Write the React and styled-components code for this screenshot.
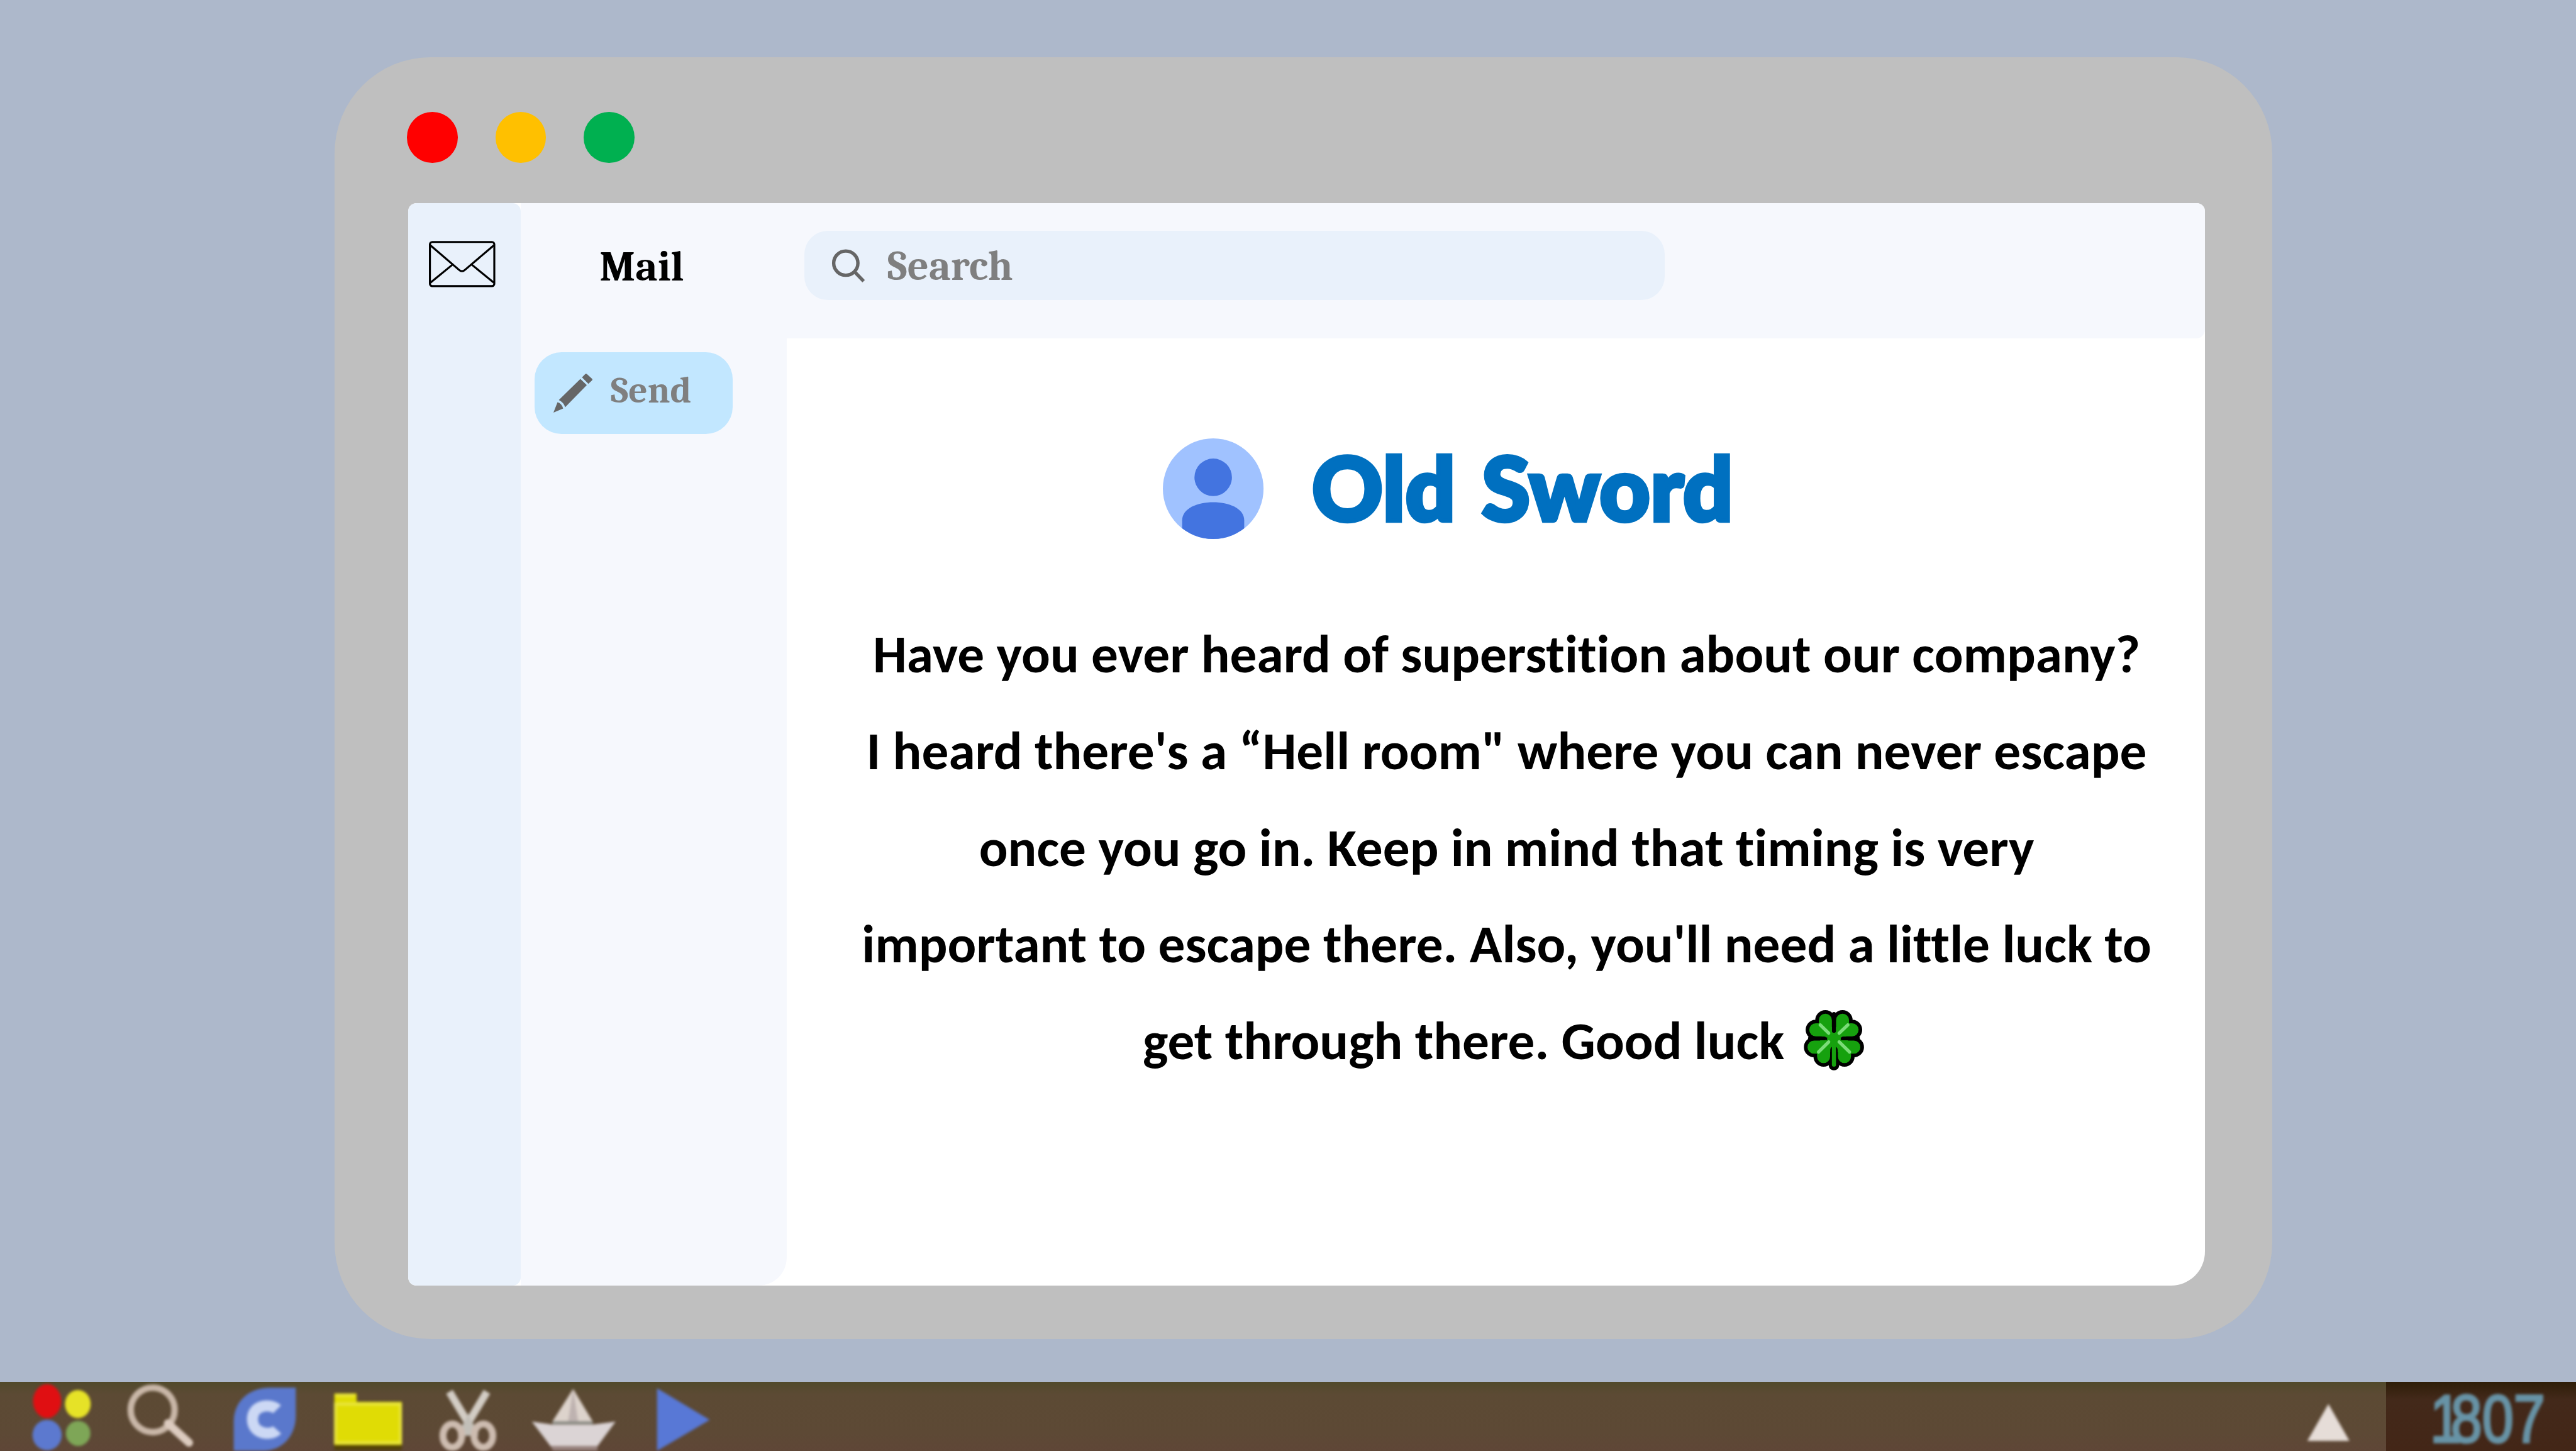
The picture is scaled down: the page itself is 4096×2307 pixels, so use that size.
import React from "react";
import styled, { createGlobalStyle } from "styled-components";

/* Design units are laid out on a 4400-wide artboard. */
const u = (n) => `${((n * 4096) / 4400).toFixed(2)}px`;

const serif = `Cambria, Caladea, "Liberation Serif", serif`;

const GlobalStyle = createGlobalStyle`
  * { box-sizing: border-box; }
  body { margin: 0; overflow: hidden; }
`;

const Desktop = styled.div`
  width: 4096px;
  height: 2307px;
  display: flex;
  flex-direction: column;
  justify-content: space-between;
  background: #adb8cb;
  overflow: hidden;
`;

const Window = styled.main`
  width: ${u(3310)};
  height: ${u(2189.5)};
  margin: ${u(97.3)} 0 0 ${u(571)};
  padding: 0 ${u(115)} 0 ${u(126.3)};
  border-radius: ${u(164)};
  background: #bfbfbf;
`;

const TitleBar = styled.div`
  height: ${u(249.7)};
  padding-top: ${u(94)};
  margin-left: ${u(-2)};
  display: flex;
  gap: ${u(64.5)};
`;

const Dot = styled.span`
  width: ${u(86.5)};
  height: ${u(86.5)};
  border-radius: 50%;
  background: ${(p) => p.$color};
`;

const Screen = styled.section`
  height: ${u(1848.7)};
  display: flex;
  border-radius: ${u(14)} ${u(14)} ${u(58)} ${u(14)};
  background: #ffffff;
  overflow: hidden;
`;

const Rail = styled.nav`
  width: ${u(192.7)};
  padding: ${u(64)} 0 0 ${u(35)};
  border-radius: ${u(14)};
  background: #e9f1fb;
`;

const Main = styled.div`
  flex: 1;
  display: flex;
  flex-direction: column;
`;

const Header = styled.header`
  height: ${u(231)};
  display: flex;
  align-items: flex-start;
  padding-top: ${u(47.7)};
  border-radius: 0 0 ${u(15)} 0;
  background: #f6f8fd;
`;

const MailTitle = styled.h1`
  width: ${u(484.3)};
  margin: 0;
  padding-left: ${u(134)};
  font: 700 ${u(72.5)} / ${u(124)} ${serif};
  color: #000;
`;

const SearchBox = styled.div`
  width: ${u(1469)};
  height: ${u(117.3)};
  padding-left: ${u(47)};
  display: flex;
  align-items: center;
  gap: ${u(38)};
  border-radius: ${u(40)};
  background: #e9f1fb;
`;

const Label = styled.span`
  font: 700 ${(p) => u(p.$size)} / 1.2 ${serif};
  color: #7f7f7f;
  margin: ${(p) => u(p.$drop || 0)} 0 ${(p) => u(p.$lift || 0)};
`;

const Body = styled.div`
  flex: 1;
  display: flex;
`;

const Sidebar = styled.aside`
  width: ${u(453.7)};
  padding: ${u(23.8)} 0 0 ${u(23)};
  border-radius: 0 0 ${u(48)} 0;
  background: #f6f8fd;
`;

const SendButton = styled.div`
  width: ${u(339)};
  height: ${u(139.2)};
  padding-left: ${u(32)};
  display: flex;
  align-items: center;
  gap: ${u(31)};
  border-radius: ${u(46)};
  background: #c2e7ff;
`;

const Content = styled.article`
  flex: 1;
  padding-top: ${u(170)};
`;

const Sender = styled.div`
  display: flex;
  align-items: center;
  gap: ${u(83)};
  padding-left: ${u(642.5)};
  height: ${u(173)};
`;

const SenderName = styled.h2`
  margin: 0 0 ${u(5)};
  font: 900 ${u(149)} / ${u(173)} Lato, sans-serif;
  -webkit-text-stroke: ${u(7)} #0070c0;
  color: #0070c0;
  letter-spacing: ${u(1)};
  word-spacing: ${u(8)};
  white-space: nowrap;
`;

const Message = styled.div`
  display: flex;
  flex-direction: column;
  align-items: center;
  padding: ${u(115)} 0 0 ${u(37)};
`;

const Line = styled.p`
  margin: 0 ${(p) => u(p.$shift || 0)} 0 0;
  display: flex;
  align-items: center;
  font: 700 ${u(91.7)} / ${u(165)} Carlito, Calibri, Lato, sans-serif;
  font-variant-ligatures: none;
  color: #000;
  white-space: pre;
`;

const Icon = styled.svg`
  width: ${(p) => u(p.$w)};
  height: ${(p) => u(p.$h)};
  margin-left: ${(p) => u(p.$ml || 0)};
  margin-bottom: ${(p) => u(p.$mb || 0)};
  flex: none;
  display: block;
  overflow: visible;
`;

const Taskbar = styled.footer`
  height: ${u(118)};
  display: flex;
  background: linear-gradient(#514a2b 0%, #5c4a34 18%, #5d4935 75%, #5f4637 100%);
`;

const Launcher = styled.div`
  flex: 1;
  display: flex;
  padding-left: ${u(50)};
`;

const Clock = styled.div`
  width: ${u(324)};
  padding: ${u(14)} 0 0 ${u(75)};
  background: linear-gradient(#2e1e08 0%, #43291a 25%, #432617 100%);
  font: 400 ${u(115)} / ${u(100)} "Liberation Sans", sans-serif;
  color: #6793a6;
`;

const Digits = styled.div`
  width: ${u(240)};
  white-space: nowrap;
  transform: scaleX(0.84);
  transform-origin: left center;
  -webkit-text-stroke: ${u(4)} #6793a6;
  filter: blur(${u(2.4)});

  &::first-letter {
    letter-spacing: ${u(-22)};
  }
`;

const TaskSvg = styled.svg`
  width: ${(p) => u(p.$w)};
  height: ${u(118)};
  margin-left: ${(p) => u(p.$gap)};
  flex: none;
  overflow: visible;
  filter: blur(${u(2.4)});
`;

const TaskIcon = ({ x, w, gap = 0, children }) => (
  <TaskSvg $w={w} $gap={gap} viewBox={`${x} 0 ${w} 118`}>
    {children}
  </TaskSvg>
);

const Envelope = () => (
  <Icon $w={113.5} $h={79} viewBox="0 0 113.5 79" fill="none" stroke="#000" strokeWidth="3.4">
    <rect x="1.7" y="1.9" width="110" height="75.4" rx="4" />
    <path d="M2.5 7.5 51.5 49.5Q56.5 54 61.5 49.5L111 7.5M40.5 40.4 2.5 71.5M73 40.4 111 71.5" />
  </Icon>
);

const SearchIcon = () => (
  <Icon $w={56.5} $h={57} viewBox="0 -1.5 56.5 57" fill="none" stroke="#666" strokeWidth="5.8">
    <circle cx="23.5" cy="23.6" r="20.7" />
    <path d="M38.5 38.5 54 54.5" />
  </Icon>
);

const Pencil = () => (
  <Icon $w={67} $h={67} viewBox="0 0 67 67" fill="#666">
    <path d="M0 66.5 7 49Q14 51 16.6 59.7Z" />
    <path d="M9.2 45 46 9.2 57 19.7 20 57.4Q17.5 49 9.2 45Z" />
    <path d="M48.8 6.4 54 1.2Q55.7-.6 57.5 1.2L66 8.8Q67.3 10.2 66 11.5L59.7 17.4Z" />
  </Icon>
);

const Avatar = () => (
  <Icon $w={172} $h={172} viewBox="0 0 172 172">
    <defs>
      <clipPath id="face"><circle cx="86" cy="86" r="86" /></clipPath>
    </defs>
    <circle cx="86" cy="86" r="86" fill="#a0c2ff" />
    <g clipPath="url(#face)" fill="#4374e0">
      <circle cx="86" cy="66.5" r="32" />
      <path d="M33 180V140C33 119 60 109 86 109S139 119 139 140V180Z" />
    </g>
  </Icon>
);

const lobes =
  "M231 154V210M319 154V210M182 203H235M368 203H315M173 292H235M377 292H315M222 340V285M329 340V285";

const Clover = () => (
  <Icon $w={103.3} $h={103} $ml={12} $mb={4} viewBox="120 102 310 309" fill="none" strokeLinecap="round">
    <path d={lobes} stroke="#000" strokeWidth="104" />
    <path d="M275 300V384" stroke="#000" strokeWidth="54" />
    <path d={lobes} stroke="#16a10e" strokeWidth="67" />
    <path d="M240 215H310V285H240Z" fill="#16a10e" stroke="none" />
    <path d="M275 122V208M152 247H225M398 247H323" stroke="#000" strokeWidth="20" />
    <path d="M275 306V372" stroke="#000" strokeWidth="38" />
    <path d="M275 270V382" stroke="#16a10e" strokeWidth="21" />
    <path d="M205 178 248 220M346 178 302 220M248 265 196 317M302 265 355 317" stroke="#7bdc78" strokeWidth="17" />
  </Icon>
);

const Launchers = () => (
  <Launcher>
    <TaskIcon x={50} w={110}>
      <ellipse cx="80" cy="33" rx="24" ry="29" fill="#e00f12" />
      <ellipse cx="132.5" cy="38" rx="22" ry="24" fill="#e6e227" />
      <ellipse cx="80" cy="91" rx="25" ry="26" fill="#5c79cf" />
      <ellipse cx="133" cy="88" rx="21" ry="21.5" fill="#7ea657" />
    </TaskIcon>
    <TaskIcon x={214} w={116} gap={54}>
      <ellipse cx="261" cy="48" rx="37.5" ry="38" fill="none" stroke="#c9b7a8" strokeWidth="11" />
      <path d="M287 71 323 104" stroke="#dccbbf" strokeWidth="14" strokeLinecap="round" />
    </TaskIcon>
    <TaskIcon x={394} w={118} gap={64}>
      <path d="M505 10H462C424 10 399 34 399 68V118H448C482 118 505 92 505 58Z" fill="#5a78cc" />
      <path d="M473 47C463 37 431 38 431 64S463 93 473 82" fill="none" stroke="#ccd8f4" strokeWidth="19" />
    </TaskIcon>
    <TaskIcon x={566} w={124} gap={54}>
      <path d="M571 112H686" stroke="#524205" strokeWidth="9" />
      <path d="M571 20H609V34H686V108H571Z" fill="#e0dc05" />
      <path d="M573 23H606M573 38H684V104H573Z" fill="none" stroke="#e9e53e" strokeWidth="5" />
    </TaskIcon>
    <TaskIcon x={748} w={104} gap={58}>
      <path d="M768 17 812 90M832 17 788 90" stroke="#d3cdc5" strokeWidth="13" />
      <path d="M800 55 818 92H782Z" fill="#c2bfb8" />
      <ellipse cx="773" cy="92" rx="16" ry="20" fill="none" stroke="#cdbcb0" strokeWidth="12" />
      <ellipse cx="826" cy="92" rx="16" ry="20" fill="none" stroke="#cdbcb0" strokeWidth="12" />
    </TaskIcon>
    <TaskIcon x={905} w={151} gap={53}>
      <path d="M979.5 12 1013 68H944Z" fill="#ddd3cc" />
      <path d="M979.5 12 988 68H971Z" fill="#beb2b0" />
      <path d="M944 70H1013" stroke="#8e8f88" strokeWidth="5" />
      <path d="M909 68 944 73H1013L1052 68 1021 110H941Z" fill="#dbd4d5" />
      <path d="M941 110H1021V118H945Z" fill="#96807c" />
    </TaskIcon>
    <TaskIcon x={1118} w={97} gap={62}>
      <path d="M1122 11 1212 65 1122 118Z" fill="#5878d6" />
    </TaskIcon>
    <TaskIcon x={3938} w={78} gap={2723}>
      <path d="M3977 38 4013 101H3941Z" fill="#e6ddd8" />
    </TaskIcon>
  </Launcher>
);

const lines = [
  "Have you ever heard of superstition about our company?",
  "I heard there's a “Hell room\" where you can never escape",
  "once you go in. Keep in mind that timing is very",
  "important to escape there. Also, you'll need a little luck to",
];

export default function App() {
  return (
    <Desktop>
      <GlobalStyle />
      <Window>
        <TitleBar>
          <Dot $color="#ff0000" />
          <Dot $color="#ffc000" />
          <Dot $color="#00b050" />
        </TitleBar>
        <Screen>
          <Rail>
            <Envelope />
          </Rail>
          <Main>
            <Header>
              <MailTitle>Mail</MailTitle>
              <SearchBox>
                <SearchIcon />
                <Label $size={71.3} $drop={4}>Search</Label>
              </SearchBox>
            </Header>
            <Body>
              <Sidebar>
                <SendButton>
                  <Pencil />
                  <Label $size={63.7} $lift={8}>Send</Label>
                </SendButton>
              </Sidebar>
              <Content>
                <Sender>
                  <Avatar />
                  <SenderName>Old Sword</SenderName>
                </Sender>
                <Message>
                  {lines.map((text) => (
                    <Line key={text}>{text}</Line>
                  ))}
                  <Line $shift={11}>
                    {"get through there. Good luck "}
                    <Clover />
                  </Line>
                </Message>
              </Content>
            </Body>
          </Main>
        </Screen>
      </Window>
      <Taskbar>
        <Launchers />
        <Clock>
          <Digits>1807</Digits>
        </Clock>
      </Taskbar>
    </Desktop>
  );
}
